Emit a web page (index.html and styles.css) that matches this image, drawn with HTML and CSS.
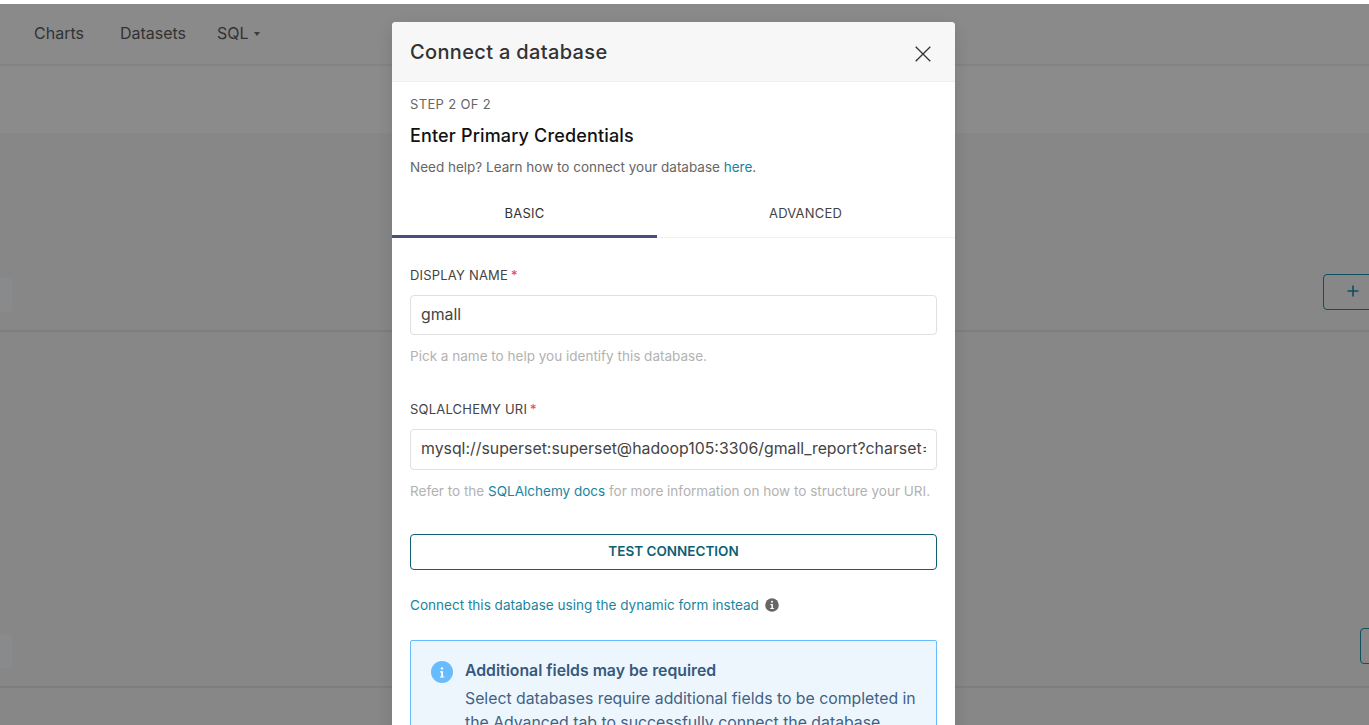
FILE: index.html
```html
<!DOCTYPE html>
<html lang="en">
<head>
<meta charset="utf-8">
<title>Connect a database</title>
<link rel="stylesheet" href="styles.css">
</head>
<body>
<div class="page">
  <nav class="nav">
    <a class="nav-item">Charts</a>
    <a class="nav-item">Datasets</a>
    <a class="nav-item nav-sql">SQL<span class="caret"></span></a>
  </nav>
  <div class="band"></div>
  <section class="row row-one">
    <span class="chip"></span>
    <span class="add add-one"><svg class="plus" viewBox="0 0 12 12" width="12" height="12"><path d="M6 0.5v11M0.5 6h11" fill="none" stroke="#0e4f60" stroke-width="1.6"/></svg></span>
  </section>
  <section class="row row-two">
    <span class="chip"></span>
    <span class="add add-two"></span>
  </section>
</div>

<div class="modal">
  <header class="modal-head">
    <h2 class="modal-title">Connect a database</h2>
    <svg class="close" viewBox="0 0 16 16" width="16" height="16"><path d="M0.7 0.7L15.3 15.3M15.3 0.7L0.7 15.3" fill="none" stroke="#323232" stroke-width="1.3"/></svg>
  </header>
  <div class="intro">
    <p class="step">STEP 2 OF 2</p>
    <h3 class="subtitle">Enter Primary Credentials</h3>
    <p class="help">Need help? Learn how to connect your database <a class="link">here</a>.</p>
  </div>
  <div class="tabs">
    <div class="tab tab-active">BASIC</div>
    <div class="tab tab-rest">ADVANCED</div>
  </div>
  <form class="form">
    <div class="field field-name">
      <label class="label">DISPLAY NAME<span class="req">*</span></label>
      <div class="input">gmall</div>
      <p class="hint">Pick a name to help you identify this database.</p>
    </div>
    <div class="field field-uri">
      <label class="label">SQLALCHEMY URI<span class="req">*</span></label>
      <div class="input input-uri"><span class="input-clip">mysql://superset:superset@hadoop105:3306/gmall_report?charset=utf8</span></div>
      <p class="hint">Refer to the <a class="link">SQLAlchemy docs</a> for more information on how to structure your URI.</p>
    </div>
    <div class="test-btn">TEST CONNECTION</div>
    <p class="switch"><a class="link">Connect this database using the dynamic form instead</a>
      <svg class="info-small" viewBox="0 0 14 14" width="14" height="14"><circle cx="7" cy="7" r="6.8" fill="#666"/><rect x="6" y="2.8" width="2" height="2" rx="1" fill="#fff"/><path d="M5.4 6h2.5v4h1v1H5.3v-1h1.1V7H5.4z" fill="#fff"/></svg>
    </p>
    <div class="alert">
      <svg class="info-big" viewBox="0 0 22 22" width="22" height="22"><circle cx="11" cy="11" r="11" fill="#66bcfe"/><rect x="9.8" y="6.2" width="2.4" height="2.4" rx="1.2" fill="#fff"/><path d="M9 10.2h3v5.2h1.2v1.2H9v-1.2h1.2v-4H9z" fill="#fff"/></svg>
      <div class="alert-body">
        <h4 class="alert-title">Additional fields may be required</h4>
        <p class="alert-text">Select databases require additional fields to be completed in the Advanced tab to successfully connect the database.</p>
      </div>
    </div>
  </form>
</div>
</body>
</html>
```
FILE: styles.css
```css
* { box-sizing: border-box; }
html, body { margin: 0; height: 725px; overflow: hidden; }
body {
  background: #fff;
  font-family: Inter, "Liberation Sans", sans-serif;
  color: #323232;
}
p, h2, h3, h4 { margin: 0; font-weight: 400; }

.page {
  margin-top: 4px;
  height: 721px;
  background: #878787;
  overflow: hidden;
}
.nav {
  height: 62px;
  padding: 0 0 2px 34px;
  display: flex;
  align-items: center;
  gap: 36px;
  background: #8a8a8a;
  border-bottom: 2px solid #838383;
  font-size: 16px;
  color: #323232;
}
.nav-sql { margin-left: -5px; display: flex; align-items: center; }
.caret {
  margin-left: 5px;
  margin-top: 2px;
  border-style: solid;
  border-width: 4px 3.5px 0;
  border-color: #3c3c3c transparent transparent;
}
.band { height: 67px; background: #8b8b8b; }
.row {
  position: relative;
  height: 199px;
  border-bottom: 2px solid #7e7e7e;
}
.row-two { height: 356px; }
.chip {
  position: absolute;
  left: 0;
  bottom: 18px;
  width: 12px;
  height: 34px;
  background: #888a8c;
  border-radius: 0 3px 3px 0;
}
.add {
  position: absolute;
  height: 36px;
  width: 120px;
  border: 1px solid #0e4f60;
  border-radius: 4px;
  padding: 10px 0 0 23px;
}
.add-one { left: 1323px; bottom: 20px; }
.add-two { left: 1360px; bottom: 22px; }
.plus { display: block; }

.modal {
  position: absolute;
  top: 22px;
  left: 392px;
  width: 563px;
  height: 780px;
  background: #fff;
  border-radius: 4px 4px 0 0;
  box-shadow: 0 6px 16px rgba(0, 0, 0, .12);
}
.modal-head {
  height: 60px;
  padding: 0 24px 0 18px;
  display: flex;
  align-items: center;
  justify-content: space-between;
  background: #f7f7f7;
  border-bottom: 1px solid #eeeeee;
  border-radius: 4px 4px 0 0;
}
.modal-title { font-size: 20px; font-weight: 500; line-height: 28px; letter-spacing: .34px; color: #323232; }
.close { display: block; margin-top: 4px; }

.intro { padding: 12px 18px 0; }
.step { font-size: 13px; line-height: 20px; letter-spacing: .35px; color: #666; }
.subtitle { font-size: 18px; font-weight: 500; line-height: 24px; letter-spacing: .16px; margin-top: 10px; color: #111; }
.help { font-size: 13.5px; line-height: 20px; margin-top: 9px; color: #666; }
.link { color: #1985a0; }

.tabs {
  height: 60px;
  display: flex;
  margin-top: 1px;
  border-bottom: 1px solid #f0f0f0;
  font-size: 13px;
  letter-spacing: .2px;
  color: #323232;
}
.tab { display: flex; align-items: center; justify-content: center; }
.tab-active { width: 265px; border-bottom: 3px solid #484f7d; margin-bottom: -1px; padding-top: 13px; }
.tab-rest { flex: 1; padding-right: 1px; padding-top: 11px; color: #444; }

.form { padding: 0 18px; }
.field-name { padding-top: 27px; }
.field-uri { padding-top: 33px; }
.label { display: block; font-size: 13px; line-height: 20px; letter-spacing: .2px; color: #444; }
.req { color: #e04355; margin-left: 3px; }
.input {
  margin-top: 10px;
  height: 40px;
  padding: 0 10px 1px;
  display: flex;
  align-items: center;
  border: 1px solid #e0e0e0;
  border-radius: 4px;
  font-size: 15.85px;
  color: #444;
  white-space: nowrap;
  overflow: hidden;
}
.input-uri { height: 41px; padding-bottom: 2px; }
.input-clip { display: block; width: 505px; overflow: hidden; }
.hint { margin-top: 11px; font-size: 13.52px; line-height: 20px; color: #b2b2b2; white-space: nowrap; }
.test-btn {
  margin-top: 33px;
  height: 36px;
  padding-bottom: 3px;
  display: flex;
  align-items: center;
  justify-content: center;
  border: 1px solid #0e5f73;
  border-radius: 4px;
  font-size: 13.5px;
  font-weight: 600;
  color: #0e5f73;
}
.switch {
  margin-top: 25px;
  height: 20px;
  display: flex;
  align-items: center;
  gap: 6px;
  font-size: 13.55px;
}
.info-small { display: block; }
.alert {
  margin-top: 25px;
  height: 140px;
  padding: 20px 10px 0 20px;
  display: flex;
  gap: 12px;
  background: #eef6fd;
  border: 1px solid #66bcfe;
  border-radius: 2px;
}
.info-big { display: block; flex: none; }
.alert-title { font-size: 15.8px; font-weight: 600; line-height: 20px; color: #36597d; }
.alert-text { margin-top: 6px; font-size: 15.8px; line-height: 24px; color: #3f6285; }
```
